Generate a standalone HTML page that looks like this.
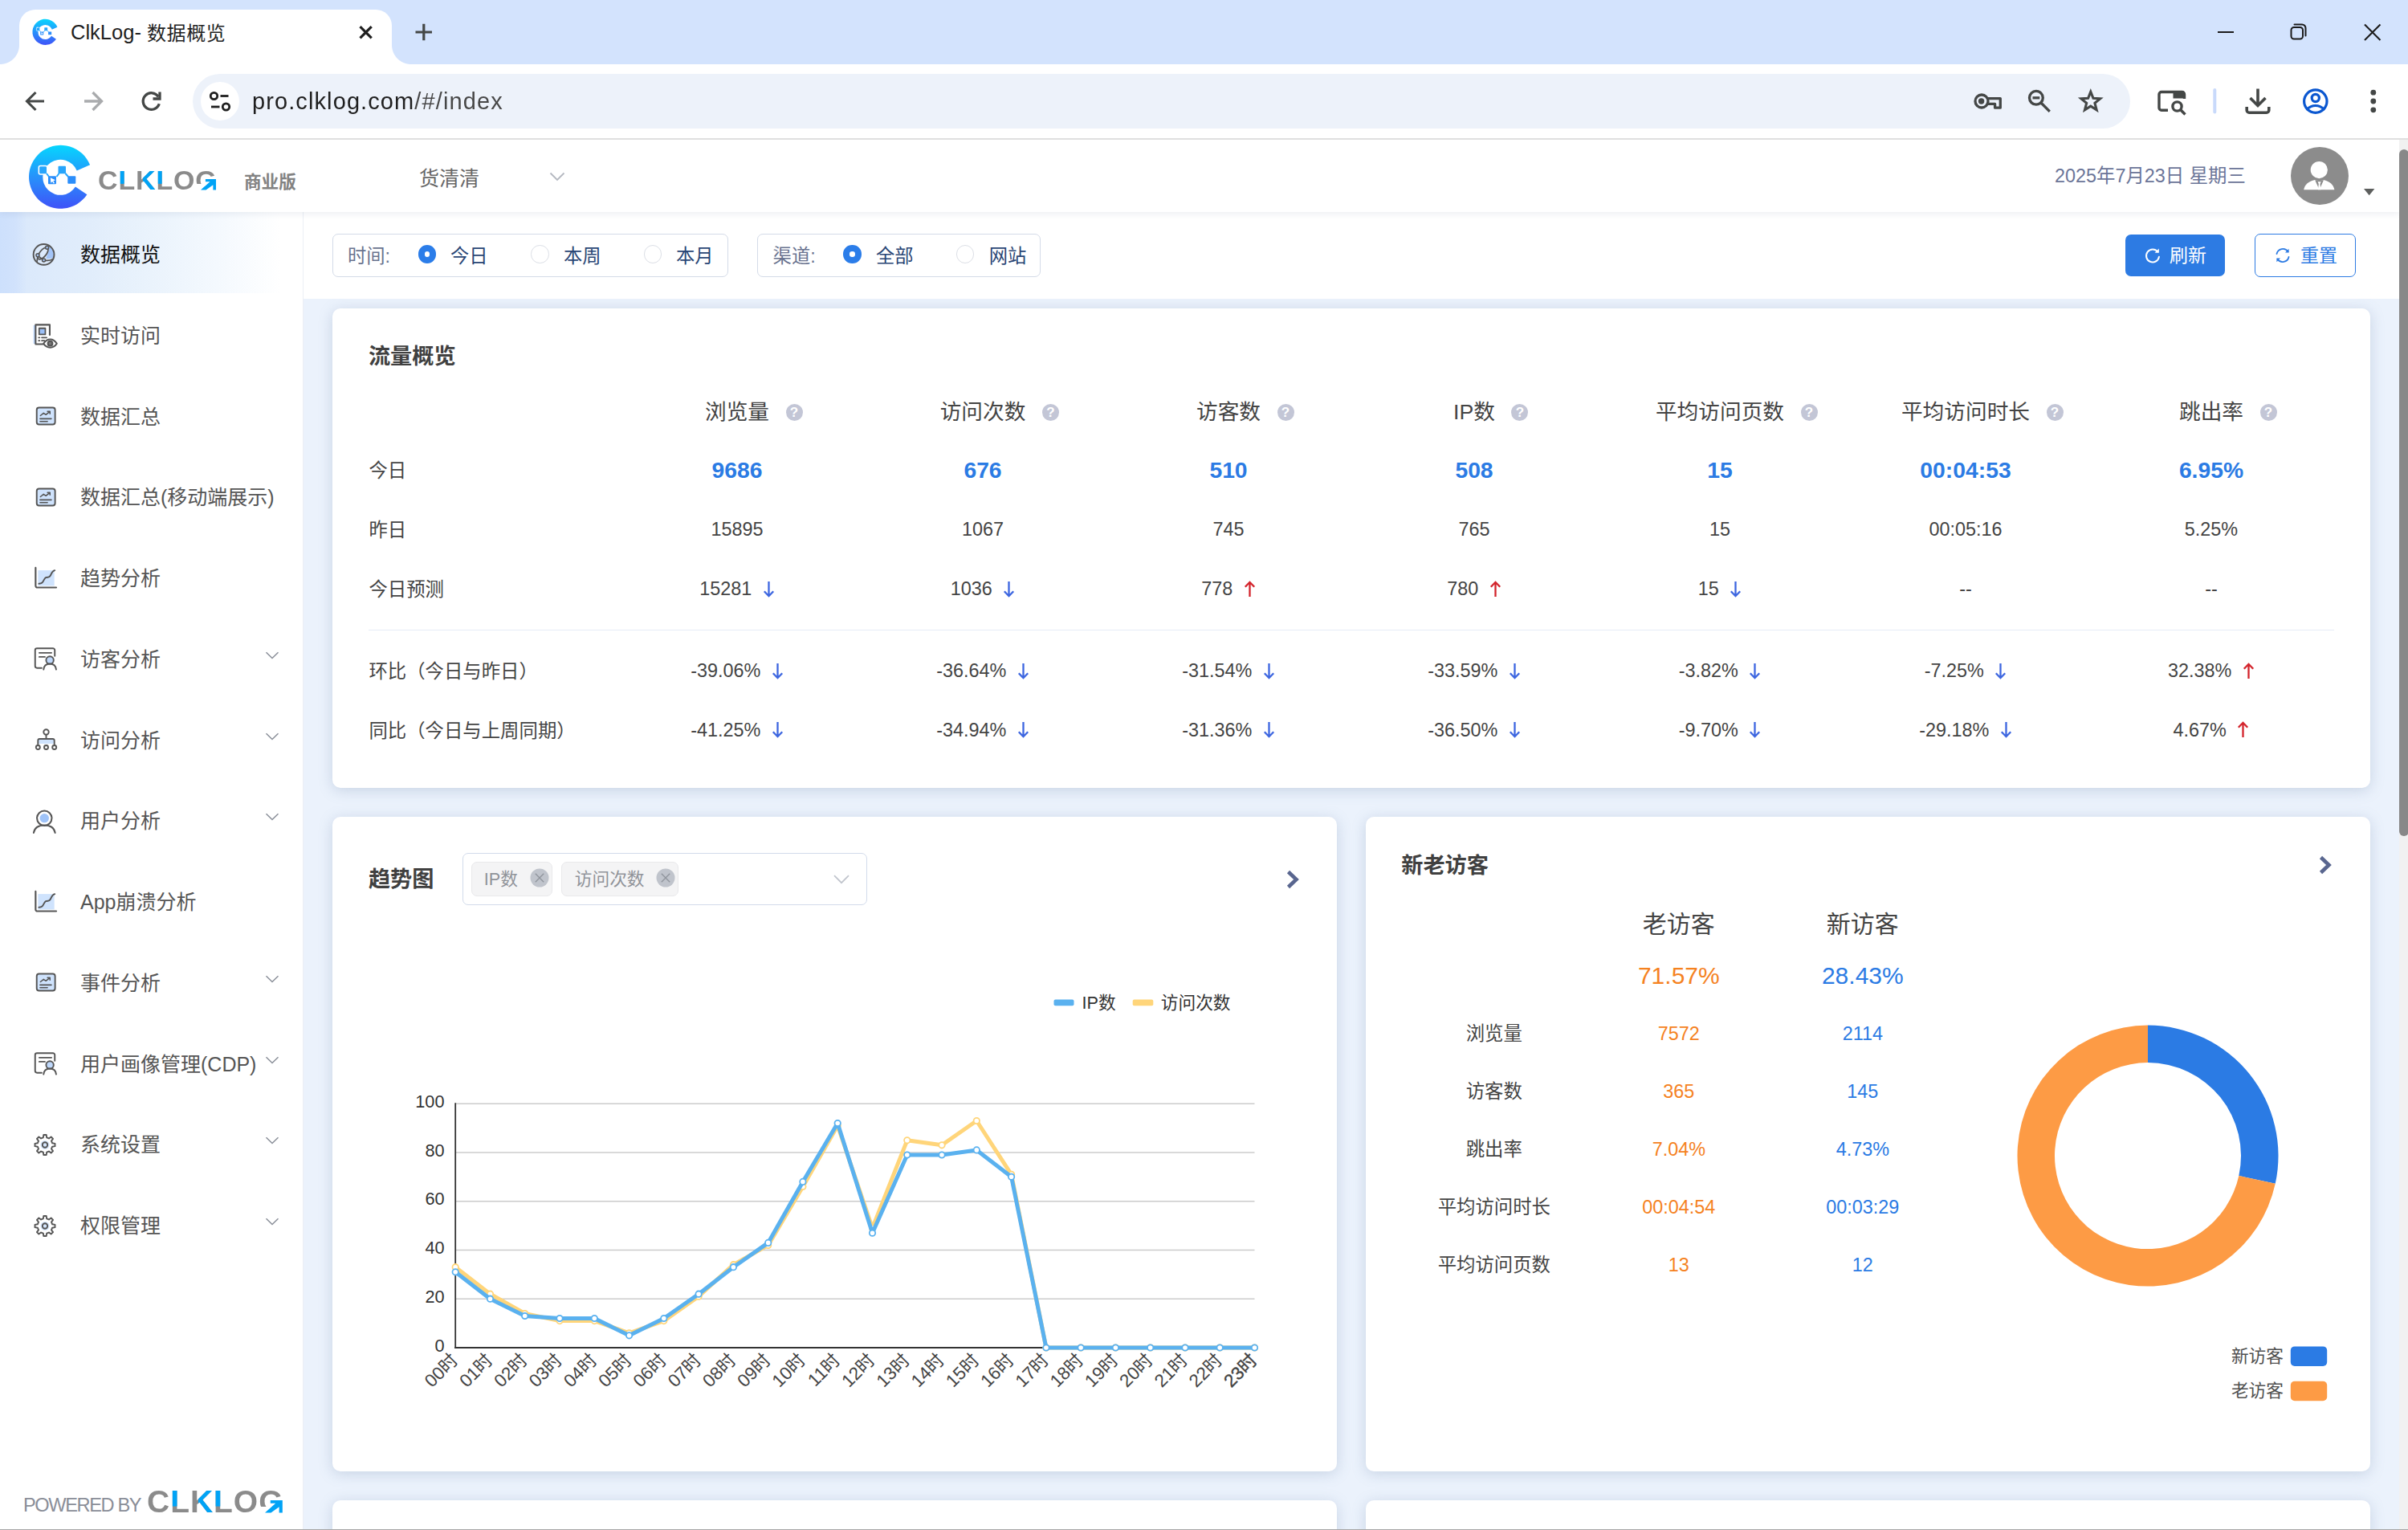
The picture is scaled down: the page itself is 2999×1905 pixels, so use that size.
<!DOCTYPE html>
<html lang="zh-CN">
<head>
<meta charset="utf-8">
<title>ClkLog- 数据概览</title>
<style>
*{box-sizing:border-box;margin:0;padding:0}
html,body{width:2999px;height:1905px;overflow:hidden;background:#fff}
body{position:relative;font-family:"Liberation Sans","Noto Sans CJK SC",sans-serif;color:#444;-webkit-font-smoothing:antialiased}
.abs{position:absolute}
svg{display:block;overflow:visible}
/* ---------- browser chrome ---------- */
#tabbar{position:absolute;left:0;top:0;width:2999px;height:80px;background:#d3e3fd}
#tab{position:absolute;left:24px;top:12px;width:464px;height:68px;background:#fff;border-radius:20px 20px 0 0}
#tab:before,#tab:after{content:"";position:absolute;bottom:0;width:24px;height:24px;background:radial-gradient(circle at 0 0,rgba(255,255,255,0) 23.5px,#fff 24.5px)}
#tab:before{left:-24px}
#tab:after{right:-24px;transform:scaleX(-1)}
#tabtitle{position:absolute;left:88px;top:22.200px;font-size:24px;line-height:38px;color:#1f1f1f;white-space:nowrap;letter-spacing:.6px}
#tabtitle .lt{font-size:25.500px;letter-spacing:0;position:relative;top:-1.300px}
#toolbar{position:absolute;left:0;top:80px;width:2999px;height:92px;background:#fff}
#tbline{position:absolute;left:0;top:172px;width:2999px;height:2px;background:#dfdfdf}
#omni{position:absolute;left:240px;top:92px;width:2413px;height:68px;border-radius:34px;background:#edf2fa}
#siteinfo{position:absolute;left:250px;top:102px;width:48px;height:48px;border-radius:24px;background:#fff}
#url{position:absolute;left:314px;top:104px;font-size:29px;line-height:44px;color:#1f1f1f;white-space:nowrap;letter-spacing:1.1px}
#url{color:transparent;-webkit-text-fill-color:transparent;background-image:linear-gradient(90deg,#1f1f1f 0,#1f1f1f 202.500px,#474747 202.500px);-webkit-background-clip:text;background-clip:text}
/* ---------- app ---------- */
#app{position:absolute;left:0;top:174px;width:2988px;height:1730px;background:#ebf2fc;overflow:hidden}
#bottomline{position:absolute;left:0;top:1904px;width:2999px;height:1px;background:#a6a6a6}
#sbtrack{position:absolute;left:2988px;top:174px;width:11px;height:1730px;background:#f1f1f1}
#sbthumb{position:absolute;left:2988px;top:186px;width:12px;height:855px;border-radius:6px;background:#888}
#header{position:absolute;left:0;top:0;width:2988px;height:90px;background:#fff;box-shadow:0 2px 8px rgba(60,80,120,.10);z-index:5}
#sidebar{position:absolute;left:0;top:90px;width:378px;height:1640px;background:#fff;border-right:1px solid #eceff5;z-index:3}
#filterbar{position:absolute;left:378px;top:90px;width:2610px;height:108px;background:#fff;z-index:2}
.card{position:absolute;background:#fff;border-radius:10px;box-shadow:0 3px 17px rgba(105,130,165,.27)}

/* header */
#hlogo{position:absolute;left:36px;top:7px}
.wm{position:absolute;font-family:"Liberation Sans",sans-serif;font-weight:bold;white-space:nowrap;line-height:1.2em;letter-spacing:.025em;color:transparent;-webkit-text-fill-color:transparent;background-image:linear-gradient(#00a3f6,#00a3f6),linear-gradient(#00a3f6,#00a3f6),linear-gradient(#00a3f6,#00a3f6),linear-gradient(#8b8b8b,#8b8b8b);background-repeat:no-repeat;background-size:.611em .732em,.485em 1.2em,.611em .732em,100% 100%;background-position:.747em 0,1.633em 0,2.13em 0,0 0;-webkit-background-clip:text;background-clip:text}
.wm u{position:absolute;background:#fff;display:block}
.wm .m1{left:3.549em;width:.838em;top:.74em;height:.3em}
.wm .m2{left:3.869em;width:.518em;top:.5em;height:.3em}
.wm svg{position:absolute;left:3.759em;top:.545em;width:.56em;height:.395em}
#hword{left:122px;top:30px;font-size:34px}
#edition{position:absolute;left:304px;top:37px;font-size:21.600px;line-height:32px;font-weight:bold;color:#828282;white-space:nowrap}
#proj{position:absolute;left:522px;top:29.500px;font-size:25px;line-height:36px;color:#666;white-space:nowrap}
#hdate{position:absolute;left:2559px;top:27.200px;font-size:23.400px;line-height:36px;color:#6b7598;white-space:nowrap}
#avatar{position:absolute;left:2853px;top:9px;width:72px;height:72px;border-radius:36px;background:#8c8c8c;overflow:hidden}
/*SIDEBAR*/

.mi{position:absolute;left:0;width:376px;height:100.75px}
.mi.act{background:linear-gradient(90deg,#cde0fc 0,#d1e2fc 5%,#dbe9fb 9%,#e1edfb 30%,#eaf3fc 50%,#f4f9fe 72%,#fff 93%)}
.mic{position:absolute;left:41px;top:38.500px}
.mt{position:absolute;left:100px;top:33px;font-size:25px;line-height:40px;color:#555;white-space:nowrap}
.mi.act .mt{color:#111}
.mch{position:absolute;left:330px;top:43px}
#powered{position:absolute;left:29px;top:1594px;font-size:23.600px;line-height:32px;color:#8a8e98;white-space:nowrap;letter-spacing:-1.38px}
#fword{left:183px;top:1583px;font-size:39px}

/*/SIDEBAR*/
/*FILTER*/

.fbox{position:absolute;top:27px;height:54px;border:1.500px solid #d4dbe8;border-radius:7px;background:#fff}
.ft{position:absolute;top:37px;font-size:23.300px;line-height:36px;color:#2a4675;white-space:nowrap}
.ft.lab{color:#69738f}
.ft b{font-weight:normal;margin-left:3px}
.rd{position:absolute;top:41.200px;width:22.400px;height:22.400px;border-radius:50%;border:1.500px solid #dcdfe6;background:#fff}
.rd.on{border:8px solid #2b7de9}
.btn{position:absolute;top:27.800px;height:52.400px;border-radius:7px}
.btn span{position:absolute;top:8px;font-size:23px;line-height:36px;white-space:nowrap}
.btn.pri{background:#2d7be3;color:#fff}
.btn.sec{background:#fff;border:1.500px solid #2d7be3;color:#2d7be3;top:27px;height:54px}
.btn.sec span{top:7.500px;left:55px}

/*/FILTER*/
/*C1*/

.ctitle{position:absolute;margin-left:-.5px;font-size:27.200px;line-height:40px;font-weight:bold;color:#404040;white-space:nowrap}
.tc{position:absolute;width:306px;height:40px;line-height:40px;text-align:center;font-size:23.400px;color:#444;white-space:nowrap}
.tc.th{font-size:26.700px;color:#444;margin-top:.5px}
.tc.tb{font-size:28.300px;font-weight:bold;color:#2b7be4}
.tl{position:absolute;margin-top:1px;height:40px;line-height:40px;font-size:23.400px;color:#444;white-space:nowrap}
.hq{position:relative;display:inline-block}
.q{position:absolute;left:100%;margin-left:20.500px;top:9.200px;width:21px;height:21px;border-radius:50%;background:#c3c6d6;color:#fff;font-style:normal;font-size:17px;line-height:21.500px;text-align:center;font-weight:bold}
.ar{display:inline-block;vertical-align:middle;margin-left:13.500px;position:relative;top:-2px}
.hr{position:absolute;height:1.200px;background:#e6ecf6}

/*/C1*/
/*C2*/

.sel{position:absolute;border:1.500px solid #d2dbeb;border-radius:7px;background:#fff}
.tag{position:absolute;border:1px solid #e9e9eb;border-radius:7px;background:#f4f4f5}
.tag span{position:absolute;top:3px;font-size:21.700px;line-height:36px;color:#909399;white-space:nowrap}

/*/C2*/
/*C3*/

.vc{position:absolute;width:260px;height:44px;line-height:44px;text-align:center;font-size:23.400px;color:#444;white-space:nowrap}
.vc.vh{font-size:30px}
.vc.vp{font-size:30px}
.vc.or{color:#f5821f}
.vc.bl{color:#2b7be4}
.lg{position:absolute;height:36px;line-height:36px;font-size:21.700px;color:#505050;white-space:nowrap}

/*/C3*/
</style>
</head>
<body>
<div id="tabbar"><div id="tab"></div><div id="tabtitle"><span class="lt">ClkLog- </span>数据概览</div></div>
<div id="toolbar"></div>
<div id="omni"></div><div id="siteinfo"></div>
<div id="url">pro.clklog.com/#/index</div>
<div id="tbline"></div>
<svg width="0" height="0" style="position:absolute"><defs>
<linearGradient id="clg" x1="0" y1="0" x2="0" y2="1"><stop offset="0" stop-color="#06d6fe"/><stop offset=".5" stop-color="#2792fb"/><stop offset="1" stop-color="#3f52f8"/></linearGradient>
<g id="clogo">
<path d="M76.100 24.300A39.500 39.500 0 1 0 72.400 61.200L57.900 51.600A22 22 0 1 1 59.700 31.500z" fill="url(#clg)"/>
<rect x="12.300" y="25.500" width="10.500" height="10.500" rx="2" fill="#27a5fc" stroke="#fff" stroke-width="1.600"/>
<rect x="36.500" y="25.800" width="9.500" height="9.500" rx="1" fill="#27a5fc"/>
<rect x="24" y="38.300" width="10" height="10" rx="1" fill="#2b8efb"/>
<rect x="48.300" y="38.300" width="10" height="9.500" rx="1" fill="#2b8efb"/>
<path d="M22 35l3 4M34.500 39l3-4M45.500 35l3.500 4" stroke="#27a5fc" stroke-width="2"/>
<path d="M26.800 40.300l6.200 3-2.600.9 1.500 2.700-1.200.7-1.500-2.700-1.900 1.900z" fill="#fff"/>
</g></defs></svg>
<svg id="chromeicons" class="abs" style="left:0;top:0" width="2999" height="174" viewBox="0 0 2999 174" fill="none" stroke-linecap="round" stroke-linejoin="round">
<defs><linearGradient id="lg" x1="0" y1="0" x2="0" y2="1"><stop offset="0" stop-color="#08d3fe"/><stop offset=".55" stop-color="#2a8cfb"/><stop offset="1" stop-color="#3d56f8"/></linearGradient></defs>
<!-- favicon -->
<g transform="translate(40.4,23.8) scale(.408)"><use href="#clogo"/></g>
<!-- tab close -->
<path d="M448.5 33.2l14.2 14.2M462.7 33.2l-14.2 14.2" stroke="#1f1f1f" stroke-width="3.2" stroke-linecap="butt"/>
<!-- new tab plus -->
<path d="M517.5 40h20.500M527.800 29.700v20.500" stroke="#444746" stroke-width="3.200" stroke-linecap="butt"/>
<!-- window controls -->
<path d="M2762 40h20" stroke="#1b1b1b" stroke-width="2" stroke-linecap="butt"/>
<rect x="2853.5" y="34" width="14.5" height="14.5" rx="3.5" stroke="#1b1b1b" stroke-width="2"/>
<path d="M2857.5 30.5h9.5a4.500 4.500 0 0 1 4.500 4.500v9.5" stroke="#1b1b1b" stroke-width="2"/>
<path d="M2945 30.5l19.5 19.5M2964.500 30.5l-19.5 19.5" stroke="#1b1b1b" stroke-width="2.100" stroke-linecap="butt"/>
<!-- back / forward / reload -->
<path d="M55 126h-21M44.500 115l-11 11 11 11" stroke="#444746" stroke-width="3.100" stroke-linecap="butt" stroke-linejoin="miter"/>
<path d="M105 126h21M115.500 115l11 11-11 11" stroke="#a9abad" stroke-width="3.300" stroke-linecap="butt" stroke-linejoin="miter"/>
<path d="M197.200 120.500a10.300 10.300 0 1 0 1.100 8.700" stroke="#444746" stroke-width="3.300" stroke-linecap="butt"/>
<path d="M199 114.500v8.500h-8.500" stroke="#444746" stroke-width="3.300" stroke-linecap="butt" stroke-linejoin="miter"/>
<!-- site info (tune) -->
<g stroke="#1f1f1f" stroke-width="2.800" stroke-linecap="butt"><circle cx="266.500" cy="119.500" r="4.200"/><path d="M274.500 119.500h10"/><circle cx="281.500" cy="133" r="4.200"/><path d="M263 133h10.500"/></g>
<!-- key -->
<g stroke="#444746" stroke-width="3.300" stroke-linejoin="round" stroke-linecap="butt"><circle cx="2468" cy="126" r="8"/><path d="M2475.600 122.600H2491.300V134.200H2484.600V129.400H2475.600"/><circle cx="2467.600" cy="126" r="3.700" fill="#444746" stroke="none"/></g>
<!-- zoom out -->
<g stroke="#444746" stroke-width="3.300" stroke-linecap="butt"><circle cx="2535.900" cy="121.800" r="8.400"/><path d="M2542 128l10.800 10.800"/><path d="M2531.500 121.800h8.800"/></g>
<!-- star -->
<path d="M2603.80 114.20L2606.97 122.33L2615.69 122.84L2608.94 128.37L2611.15 136.81L2603.80 132.10L2596.45 136.81L2598.66 128.37L2591.91 122.84L2600.63 122.33Z" stroke="#444746" stroke-width="3.100" stroke-linejoin="miter"/>
<!-- tab search -->
<g stroke="#444746" stroke-width="3.400" stroke-linecap="butt"><path d="M2700 137.300h-8a3 3 0 0 1-3-3v-16.800a3 3 0 0 1 3-3h25.500a3 3 0 0 1 3 3v5.500"/><path d="M2706.500 113h11a4 4 0 0 1 4 4v5.500h-15z" fill="#444746" stroke="none"/><circle cx="2711.500" cy="132.500" r="5.600"/><path d="M2715.800 136.800l5.700 5.700"/></g>
<!-- separator -->
<rect x="2756.300" y="110" width="4" height="31.500" rx="2" fill="#c9dafb"/>
<!-- download -->
<g stroke="#444746" stroke-width="3.600" stroke-linecap="butt"><path d="M2812 110.500v20.500"/><path d="M2802.500 122l9.500 9.500 9.500-9.500" stroke-linejoin="miter"/><path d="M2798.200 133v4.200a3 3 0 0 0 3 3h21.600a3 3 0 0 0 3-3v-4.200"/></g>
<!-- profile -->
<g stroke="#0b57d0" stroke-width="3.200"><circle cx="2883.800" cy="126.100" r="14.200"/><circle cx="2883.800" cy="122" r="4.600"/><path d="M2873.500 135.800c3-3 6.500-4.300 10.300-4.300s7.300 1.300 10.300 4.300"/></g>
<!-- dots -->
<g fill="#444746"><circle cx="2955.800" cy="115.200" r="3.400"/><circle cx="2955.800" cy="126" r="3.400"/><circle cx="2955.800" cy="136.800" r="3.400"/></g>
</svg>
<div id="app">
  <div id="header">
    <svg id="hlogo" width="79" height="79" viewBox="0 0 79 79"><use href="#clogo"/></svg>
    <div class="wm" id="hword">CLKLOG<u class="m1"></u><u class="m2"></u><svg viewBox="0 0 18.7 13.2"><path d="M5.800 0H18.700V13.200H15.100V7.100L6.400 13.200H0L11.300 3.200H5.800z" fill="#00a3f6"/></svg></div>
    <div id="edition">商业版</div>
    <div id="proj">货清清</div>
    <svg class="abs" style="left:684px;top:40px" width="20" height="12" viewBox="0 0 20 12" fill="none"><path d="M1.500 1.500l8.500 8.500 8.500-8.500" stroke="#b4b8c0" stroke-width="1.800"/></svg>
    <div id="hdate">2025年7月23日 星期三</div>
    <div id="avatar"><svg width="72" height="72" viewBox="0 0 72 72"><circle cx="35.300" cy="28.600" r="10.600" fill="#fff"/><path d="M16.200 53.300c1.200-6.500 6-10.500 13.800-12.200l5.300 1 5.300-1c7.800 1.700 12.600 5.700 13.800 12.200z" fill="#fff"/><path d="M30.200 41.300l5.400 12 5.400-12z" fill="#8c8c8c"/><path d="M33.600 43.300h4.100l-1.200 2.800.9 7.200h-3.500l.9-7.200z" fill="#fff"/></svg></div>
    <svg class="abs" style="left:2944px;top:61px" width="14" height="9" viewBox="0 0 14 9"><path d="M0 0h13.400l-6.700 8.200z" fill="#5d5f5e"/></svg>
  </div>
  <div id="sidebar"><!--SIDEBAR-->
<svg width="0" height="0" style="position:absolute"><defs><g id="i-globe"><g stroke="#555" stroke-width="1.9" fill="none" stroke-linecap="round" stroke-linejoin="round"><path d="M20.900 3.800C19.800 10 18.500 14.500 16.500 18.600c3.500.6 6.500.2 8.900-1A12.500 12.500 0 0 0 20.900 3.800z" fill="#a3c4f7" stroke="none"/><circle cx="14" cy="14" r="12.400"/><ellipse cx="13" cy="12.600" rx="8.600" ry="3.900" transform="rotate(-50.700 13 12.600)" stroke-width="1.700"/><path d="M15.500 21c3.500.5 7-.2 9.800-1.700M6.600 16.800l-.8 5.700M8 16.500l5 3.500" stroke-width="1.700"/><circle cx="17.900" cy="5.600" r="1.900" fill="#a9c8f8" stroke-width="1.500"/><circle cx="6.700" cy="14.800" r="1.900" fill="#a9c8f8" stroke-width="1.500"/><circle cx="14" cy="20.700" r="1.900" fill="#a9c8f8" stroke-width="1.500"/></g></g><g id="i-doceye"><g stroke="#555" stroke-width="1.9" fill="none" stroke-linecap="round" stroke-linejoin="round"><path d="M2 3h2.500v21H2z" fill="#bfd8fb" stroke="none"/><path d="M13.500 24.500H4.500V2.500h16v11.500"/><rect x="8.500" y="6.500" width="7" height="7" fill="#9cc0f7" stroke-width="1.600"/><path d="M8 17h1M11.500 17h5.500M8 20.500h1M11.500 20.500h3" stroke-width="1.600"/><path d="M13.500 23.800c2-3.200 4.800-4.800 7.500-4.800s5.500 1.600 7.500 4.800c-2 3.200-4.800 4.500-7.500 4.500s-5.500-1.300-7.500-4.500z" fill="#fff"/><circle cx="21" cy="23.700" r="2.600" fill="#777"/></g></g><g id="i-panel"><g stroke="#555" stroke-width="1.9" fill="none" stroke-linecap="round" stroke-linejoin="round"><rect x="2.200" y="3.200" width="23.600" height="21.600" rx="3" fill="#cfe3fd" stroke-width="2"/><path d="M7 13.500l4-3.200 3 2 5-4M16 8h3.200v3.200" stroke-width="1.600"/><path d="M6.500 17.500h14.500M6.500 21h9.500" stroke-width="1.600"/></g></g><g id="i-line"><g stroke="#555" stroke-width="1.9" fill="none" stroke-linecap="round" stroke-linejoin="round"><rect x="5" y="4.500" width="19" height="18" fill="#cfe3fd" stroke="none"/><path d="M2.200 1.500v21a2 2 0 0 0 2 2h22" stroke-width="2"/><path d="M6 20c3.500 0 4.500-1.500 6-4.500s2.500-3 4.500-3 3-1.500 4-4 2-3.500 4-4" stroke-width="1.800"/></g></g><g id="i-docuser"><g stroke="#555" stroke-width="1.9" fill="none" stroke-linecap="round" stroke-linejoin="round"><path d="M10.500 26H4.800a2.300 2.300 0 0 1-2.300-2.300V4.300A2.300 2.300 0 0 1 4.800 2h19.400a2.300 2.300 0 0 1 2.300 2.300v7"/><path d="M7.500 7.500h15M7.500 12.500h7" stroke-width="1.700"/><circle cx="20.500" cy="16.500" r="4.600" fill="#bfd8fb"/><path d="M12.800 27.800c.5-4.800 3.700-7 7.700-7s7.200 2.200 7.700 7"/></g></g><g id="i-tree"><g stroke="#555" stroke-width="1.9" fill="none" stroke-linecap="round" stroke-linejoin="round"><rect x="4.500" y="13" width="19" height="6" fill="#cfe3fd" stroke="none"/><circle cx="14" cy="4.500" r="3.200"/><path d="M14 7.800v5M3.800 20v-5a2 2 0 0 1 2-2h16.400a2 2 0 0 1 2 2v5"/><circle cx="3.800" cy="23.500" r="2.500"/><circle cx="14" cy="23.500" r="2.500"/><circle cx="24.200" cy="23.500" r="2.500"/></g></g><g id="i-user"><g stroke="#555" stroke-width="1.9" fill="none" stroke-linecap="round" stroke-linejoin="round" stroke-width="2.700"><circle cx="14" cy="10" r="5.300" fill="#9fc3f8" stroke="none"/><circle cx="14" cy="10" r="8.600"/><path d="M1.500 27c1-5.500 5.500-8.800 12.500-8.800s11.500 3.300 12.500 8.800"/></g></g><g id="i-gear"><g stroke="#555" stroke-width="1.9" fill="none" stroke-linecap="round" stroke-linejoin="round"><circle cx="14" cy="14" r="5.500" fill="#d5e6fd" stroke="none"/><path d="M11.81 4.86 L12.32 1.51 L15.68 1.51 L16.19 4.86 L18.91 5.99 L21.64 3.98 L24.02 6.36 L22.01 9.09 L23.14 11.81 L26.49 12.32 L26.49 15.68 L23.14 16.19 L22.01 18.91 L24.02 21.64 L21.64 24.02 L18.91 22.01 L16.19 23.14 L15.68 26.49 L12.32 26.49 L11.81 23.14 L9.09 22.01 L6.36 24.02 L3.98 21.64 L5.99 18.91 L4.86 16.19 L1.51 15.68 L1.51 12.32 L4.86 11.81 L5.99 9.09 L3.98 6.36 L6.36 3.98 L9.09 5.99Z" stroke-linejoin="round"/><circle cx="14" cy="14" r="3.200"/></g></g></defs></svg>
<div class="mi act" style="top:0.00px"><svg class="mic" width="28" height="28" viewBox="0 0 28 28"><use href="#i-globe" transform="translate(-1.0 -0.6) scale(1.04)"/></svg><span class="mt">数据概览</span></div>
<div class="mi" style="top:100.75px"><svg class="mic" width="28" height="28" viewBox="0 0 28 28"><use href="#i-doceye" transform="translate(-1.6 -1.4) scale(1.10)"/></svg><span class="mt">实时访问</span></div>
<div class="mi" style="top:201.50px"><svg class="mic" width="28" height="28" viewBox="0 0 28 28"><use href="#i-panel" transform="translate(2.6 0.4) scale(0.97)"/></svg><span class="mt">数据汇总</span></div>
<div class="mi" style="top:302.25px"><svg class="mic" width="28" height="28" viewBox="0 0 28 28"><use href="#i-panel" transform="translate(2.6 0.4) scale(0.97)"/></svg><span class="mt">数据汇总(移动端展示)</span></div>
<div class="mi" style="top:403.00px"><svg class="mic" width="28" height="28" viewBox="0 0 28 28"><use href="#i-line" transform="translate(1.0 -0.7) scale(1.07)"/></svg><span class="mt">趋势分析</span></div>
<div class="mi" style="top:503.75px"><svg class="mic" width="28" height="28" viewBox="0 0 28 28"><use href="#i-docuser" transform="translate(0.2 -0.8) scale(1.02)"/></svg><span class="mt">访客分析</span><svg class="mch" width="18" height="10" viewBox="0 0 18 10" fill="none"><path d="M1.500 1.200l7.500 7.300 7.500-7.300" stroke="#8a8f99" stroke-width="1.500"/></svg></div>
<div class="mi" style="top:604.50px"><svg class="mic" width="28" height="28" viewBox="0 0 28 28"><use href="#i-tree" transform="translate(2.5 0.0) scale(1.00)"/></svg><span class="mt">访问分析</span><svg class="mch" width="18" height="10" viewBox="0 0 18 10" fill="none"><path d="M1.500 1.200l7.500 7.300 7.500-7.300" stroke="#8a8f99" stroke-width="1.500"/></svg></div>
<div class="mi" style="top:705.25px"><svg class="mic" width="28" height="28" viewBox="0 0 28 28"><use href="#i-user" transform="translate(-0.7 0.0) scale(1.07)"/></svg><span class="mt">用户分析</span><svg class="mch" width="18" height="10" viewBox="0 0 18 10" fill="none"><path d="M1.500 1.200l7.500 7.300 7.500-7.300" stroke="#8a8f99" stroke-width="1.500"/></svg></div>
<div class="mi" style="top:806.00px"><svg class="mic" width="28" height="28" viewBox="0 0 28 28"><use href="#i-line" transform="translate(1.0 -0.7) scale(1.07)"/></svg><span class="mt">App崩溃分析</span></div>
<div class="mi" style="top:906.75px"><svg class="mic" width="28" height="28" viewBox="0 0 28 28"><use href="#i-panel" transform="translate(2.6 0.4) scale(0.97)"/></svg><span class="mt">事件分析</span><svg class="mch" width="18" height="10" viewBox="0 0 18 10" fill="none"><path d="M1.500 1.200l7.500 7.300 7.500-7.300" stroke="#8a8f99" stroke-width="1.500"/></svg></div>
<div class="mi" style="top:1007.50px"><svg class="mic" width="28" height="28" viewBox="0 0 28 28"><use href="#i-docuser" transform="translate(0.2 -0.8) scale(1.02)"/></svg><span class="mt">用户画像管理(CDP)</span><svg class="mch" width="18" height="10" viewBox="0 0 18 10" fill="none"><path d="M1.500 1.200l7.500 7.300 7.500-7.300" stroke="#8a8f99" stroke-width="1.500"/></svg></div>
<div class="mi" style="top:1108.25px"><svg class="mic" width="28" height="28" viewBox="0 0 28 28"><use href="#i-gear" transform="translate(1.0 0.5) scale(1.00)"/></svg><span class="mt">系统设置</span><svg class="mch" width="18" height="10" viewBox="0 0 18 10" fill="none"><path d="M1.500 1.200l7.500 7.300 7.500-7.300" stroke="#8a8f99" stroke-width="1.500"/></svg></div>
<div class="mi" style="top:1209.00px"><svg class="mic" width="28" height="28" viewBox="0 0 28 28"><use href="#i-gear" transform="translate(1.0 0.5) scale(1.00)"/></svg><span class="mt">权限管理</span><svg class="mch" width="18" height="10" viewBox="0 0 18 10" fill="none"><path d="M1.500 1.200l7.500 7.300 7.500-7.300" stroke="#8a8f99" stroke-width="1.500"/></svg></div>
<div id="powered">POWERED BY</div><div class="wm" id="fword">CLKLOG<u class="m1"></u><u class="m2"></u><svg viewBox="0 0 18.7 13.2"><path d="M5.800 0H18.700V13.200H15.100V7.100L6.400 13.200H0L11.300 3.200H5.800z" fill="#00a3f6"/></svg></div>
<!--/SIDEBAR--></div>
  <div id="filterbar"><!--FILTER-->
<div class="fbox" style="left:36.0px;width:492.6px"></div>
<span class="ft lab" style="left:55.0px">时间:</span>
<i class="rd on" style="left:142.5px"></i>
<span class="ft " style="left:183.0px">今日</span>
<i class="rd " style="left:283.2px"></i>
<span class="ft " style="left:324.0px">本周</span>
<i class="rd " style="left:423.8px"></i>
<span class="ft " style="left:464.0px">本月</span>
<div class="fbox" style="left:565.0px;width:353.0px"></div>
<span class="ft lab" style="left:584.6px">渠道:</span>
<i class="rd on" style="left:672.2px"></i>
<span class="ft " style="left:713.0px">全部</span>
<i class="rd " style="left:812.8px"></i>
<span class="ft " style="left:853.7px">网站</span>
<div class="btn pri" style="left:2269.0px;width:124px"><svg width="22" height="22" viewBox="0 0 22 22" fill="none" style="position:absolute;left:23px;top:15px"><path d="M17.300 6.500a8 8 0 1 0 1.600 6.300" stroke="#fff" stroke-width="2" stroke-linecap="round"/><path d="M18.800 2.500v5.200h-5.200z" fill="#fff"/></svg><span style="left:55px">刷新</span></div>
<div class="btn sec" style="left:2430.0px;width:126px"><svg width="22" height="22" viewBox="0 0 22 22" fill="none" style="position:absolute;left:23px;top:15px"><path d="M3.500 9a7.800 7.800 0 0 1 14-2.800M18.500 13a7.800 7.800 0 0 1-14 2.800" stroke="#2d7be3" stroke-width="1.800" stroke-linecap="round"/><path d="M18.600 2.800v4.600h-4.600zM3.400 19.200v-4.600h4.600z" fill="#2d7be3"/></svg><span style="left:56px">重置</span></div>
<!--/FILTER--></div>
  <div class="card" id="c1" style="left:414px;top:210px;width:2538px;height:597px"><!--C1-->
<div class="ctitle" style="left:45.4px;top:40.3px">流量概览</div>
<div class="tc th" style="left:351.0px;top:108.9px"><span class="hq">浏览量<i class="q">?</i></span></div>
<div class="tc th" style="left:657.0px;top:108.9px"><span class="hq">访问次数<i class="q">?</i></span></div>
<div class="tc th" style="left:963.0px;top:108.9px"><span class="hq">访客数<i class="q">?</i></span></div>
<div class="tc th" style="left:1269.0px;top:108.9px"><span class="hq">IP数<i class="q">?</i></span></div>
<div class="tc th" style="left:1575.0px;top:108.9px"><span class="hq">平均访问页数<i class="q">?</i></span></div>
<div class="tc th" style="left:1881.0px;top:108.9px"><span class="hq">平均访问时长<i class="q">?</i></span></div>
<div class="tc th" style="left:2187.0px;top:108.9px"><span class="hq">跳出率<i class="q">?</i></span></div>
<div class="tc tb" style="left:351.0px;top:181.3px">9686</div>
<div class="tc tb" style="left:657.0px;top:181.3px">676</div>
<div class="tc tb" style="left:963.0px;top:181.3px">510</div>
<div class="tc tb" style="left:1269.0px;top:181.3px">508</div>
<div class="tc tb" style="left:1575.0px;top:181.3px">15</div>
<div class="tc tb" style="left:1881.0px;top:181.3px">00:04:53</div>
<div class="tc tb" style="left:2187.0px;top:181.3px">6.95%</div>
<div class="tc " style="left:351.0px;top:254.7px">15895</div>
<div class="tc " style="left:657.0px;top:254.7px">1067</div>
<div class="tc " style="left:963.0px;top:254.7px">745</div>
<div class="tc " style="left:1269.0px;top:254.7px">765</div>
<div class="tc " style="left:1575.0px;top:254.7px">15</div>
<div class="tc " style="left:1881.0px;top:254.7px">00:05:16</div>
<div class="tc " style="left:2187.0px;top:254.7px">5.25%</div>
<div class="tc " style="left:351.0px;top:329.2px">15281<svg class="ar" width="15" height="21" viewBox="0 0 15 21" fill="none"><path d="M7.500 1v18M1.800 13.200l5.700 6 5.700-6" stroke="#3d66e0" stroke-width="2.300"/></svg></div>
<div class="tc " style="left:657.0px;top:329.2px">1036<svg class="ar" width="15" height="21" viewBox="0 0 15 21" fill="none"><path d="M7.500 1v18M1.800 13.200l5.700 6 5.700-6" stroke="#3d66e0" stroke-width="2.300"/></svg></div>
<div class="tc " style="left:963.0px;top:329.2px">778<svg class="ar" width="15" height="21" viewBox="0 0 15 21" fill="none"><path d="M7.500 20V2M1.800 7.800l5.700-6 5.700 6" stroke="#d3242c" stroke-width="2.300"/></svg></div>
<div class="tc " style="left:1269.0px;top:329.2px">780<svg class="ar" width="15" height="21" viewBox="0 0 15 21" fill="none"><path d="M7.500 20V2M1.800 7.800l5.700-6 5.700 6" stroke="#d3242c" stroke-width="2.300"/></svg></div>
<div class="tc " style="left:1575.0px;top:329.2px">15<svg class="ar" width="15" height="21" viewBox="0 0 15 21" fill="none"><path d="M7.500 1v18M1.800 13.200l5.700 6 5.700-6" stroke="#3d66e0" stroke-width="2.300"/></svg></div>
<div class="tc " style="left:1881.0px;top:329.2px">--</div>
<div class="tc " style="left:2187.0px;top:329.2px">--</div>
<div class="tc " style="left:351.0px;top:431.2px">-39.06%<svg class="ar" width="15" height="21" viewBox="0 0 15 21" fill="none"><path d="M7.500 1v18M1.800 13.200l5.700 6 5.700-6" stroke="#3d66e0" stroke-width="2.300"/></svg></div>
<div class="tc " style="left:657.0px;top:431.2px">-36.64%<svg class="ar" width="15" height="21" viewBox="0 0 15 21" fill="none"><path d="M7.500 1v18M1.800 13.200l5.700 6 5.700-6" stroke="#3d66e0" stroke-width="2.300"/></svg></div>
<div class="tc " style="left:963.0px;top:431.2px">-31.54%<svg class="ar" width="15" height="21" viewBox="0 0 15 21" fill="none"><path d="M7.500 1v18M1.800 13.200l5.700 6 5.700-6" stroke="#3d66e0" stroke-width="2.300"/></svg></div>
<div class="tc " style="left:1269.0px;top:431.2px">-33.59%<svg class="ar" width="15" height="21" viewBox="0 0 15 21" fill="none"><path d="M7.500 1v18M1.800 13.200l5.700 6 5.700-6" stroke="#3d66e0" stroke-width="2.300"/></svg></div>
<div class="tc " style="left:1575.0px;top:431.2px">-3.82%<svg class="ar" width="15" height="21" viewBox="0 0 15 21" fill="none"><path d="M7.500 1v18M1.800 13.200l5.700 6 5.700-6" stroke="#3d66e0" stroke-width="2.300"/></svg></div>
<div class="tc " style="left:1881.0px;top:431.2px">-7.25%<svg class="ar" width="15" height="21" viewBox="0 0 15 21" fill="none"><path d="M7.500 1v18M1.800 13.200l5.700 6 5.700-6" stroke="#3d66e0" stroke-width="2.300"/></svg></div>
<div class="tc " style="left:2187.0px;top:431.2px">32.38%<svg class="ar" width="15" height="21" viewBox="0 0 15 21" fill="none"><path d="M7.500 20V2M1.800 7.800l5.700-6 5.700 6" stroke="#d3242c" stroke-width="2.300"/></svg></div>
<div class="tc " style="left:351.0px;top:504.7px">-41.25%<svg class="ar" width="15" height="21" viewBox="0 0 15 21" fill="none"><path d="M7.500 1v18M1.800 13.200l5.700 6 5.700-6" stroke="#3d66e0" stroke-width="2.300"/></svg></div>
<div class="tc " style="left:657.0px;top:504.7px">-34.94%<svg class="ar" width="15" height="21" viewBox="0 0 15 21" fill="none"><path d="M7.500 1v18M1.800 13.200l5.700 6 5.700-6" stroke="#3d66e0" stroke-width="2.300"/></svg></div>
<div class="tc " style="left:963.0px;top:504.7px">-31.36%<svg class="ar" width="15" height="21" viewBox="0 0 15 21" fill="none"><path d="M7.500 1v18M1.800 13.200l5.700 6 5.700-6" stroke="#3d66e0" stroke-width="2.300"/></svg></div>
<div class="tc " style="left:1269.0px;top:504.7px">-36.50%<svg class="ar" width="15" height="21" viewBox="0 0 15 21" fill="none"><path d="M7.500 1v18M1.800 13.200l5.700 6 5.700-6" stroke="#3d66e0" stroke-width="2.300"/></svg></div>
<div class="tc " style="left:1575.0px;top:504.7px">-9.70%<svg class="ar" width="15" height="21" viewBox="0 0 15 21" fill="none"><path d="M7.500 1v18M1.800 13.200l5.700 6 5.700-6" stroke="#3d66e0" stroke-width="2.300"/></svg></div>
<div class="tc " style="left:1881.0px;top:504.7px">-29.18%<svg class="ar" width="15" height="21" viewBox="0 0 15 21" fill="none"><path d="M7.500 1v18M1.800 13.200l5.700 6 5.700-6" stroke="#3d66e0" stroke-width="2.300"/></svg></div>
<div class="tc " style="left:2187.0px;top:504.7px">4.67%<svg class="ar" width="15" height="21" viewBox="0 0 15 21" fill="none"><path d="M7.500 20V2M1.800 7.800l5.700-6 5.700 6" stroke="#d3242c" stroke-width="2.300"/></svg></div>
<div class="tl" style="left:45.4px;top:181.3px">今日</div>
<div class="tl" style="left:45.4px;top:254.7px">昨日</div>
<div class="tl" style="left:45.4px;top:329.2px">今日预测</div>
<div class="tl" style="left:45.4px;top:431.2px">环比（今日与昨日）</div>
<div class="tl" style="left:45.4px;top:504.7px">同比（今日与上周同期）</div>
<div class="hr" style="left:45.4px;top:400.0px;width:2447.6px"></div>
<!--/C1--></div>
  <div class="card" id="c2" style="left:414px;top:843px;width:1251px;height:815px"><!--C2-->
<div class="ctitle" style="left:45.4px;top:57.5px">趋势图</div>
<div class="sel" style="left:161.8px;top:45.0px;width:504.0px;height:65.0px"></div>
<div class="tag" style="left:173.3px;top:55.9px;width:100.4px;height:43.4px"><span style="left:14.5px">IP数</span><svg style="position:absolute;left:71.7px;top:7px" width="24" height="24" viewBox="0 0 24 24"><circle cx="12" cy="12" r="11.500" fill="#c0c4cc"/><path d="M6.800 6.800l10.400 10.400M17.200 6.800L6.800 17.200" stroke="#8f949c" stroke-width="1.300"/></svg></div>
<div class="tag" style="left:285.2px;top:55.9px;width:145.5px;height:43.4px"><span style="left:15.6px">访问次数</span><svg style="position:absolute;left:116.8px;top:7px" width="24" height="24" viewBox="0 0 24 24"><circle cx="12" cy="12" r="11.500" fill="#c0c4cc"/><path d="M6.800 6.800l10.400 10.400M17.200 6.800L6.800 17.200" stroke="#8f949c" stroke-width="1.300"/></svg></div>
<svg class="abs" style="left:624.4px;top:71.5px" width="20" height="12" viewBox="0 0 20 12" fill="none"><path d="M1 1.200l9 9 9-9" stroke="#c0c4cc" stroke-width="1.700"/></svg>
<svg class="abs" style="left:1186.5px;top:65.5px" width="18" height="24" viewBox="0 0 18 24" fill="none"><path d="M3.500 2.500l10 9.500-10 9.500" stroke="#59668f" stroke-width="4.600" stroke-linejoin="miter"/></svg>
<svg class="abs" style="left:0;top:0" width="1251" height="815" viewBox="0 0 1251 815" font-family="Liberation Sans, Noto Sans CJK SC, sans-serif" font-size="21.700"><rect x="898.5" y="227.6" width="25" height="7.600" rx="2" fill="#5ab1ef"/><text x="933.6" y="239.0" fill="#333">IP数</text><rect x="996.7" y="227.6" width="25.600" height="7.600" rx="2" fill="#ffd57a"/><text x="1031.8" y="239.0" fill="#333">访问次数</text><path d="M153.2 600.24H1148.5" stroke="#ccc" stroke-width="1.600"/><path d="M153.2 539.48H1148.5" stroke="#ccc" stroke-width="1.600"/><path d="M153.2 478.72H1148.5" stroke="#ccc" stroke-width="1.600"/><path d="M153.2 417.96H1148.5" stroke="#ccc" stroke-width="1.600"/><path d="M153.2 357.20H1148.5" stroke="#ccc" stroke-width="1.600"/><path d="M153.2 356.2V662.0" stroke="#333" stroke-width="1.800"/><path d="M152.2 661.0H1148.5" stroke="#333" stroke-width="1.800"/><text x="139.5" y="665.6" text-anchor="end" fill="#333">0</text><text x="139.5" y="604.8" text-anchor="end" fill="#333">20</text><text x="139.5" y="544.1" text-anchor="end" fill="#333">40</text><text x="139.5" y="483.3" text-anchor="end" fill="#333">60</text><text x="139.5" y="422.6" text-anchor="end" fill="#333">80</text><text x="139.5" y="361.8" text-anchor="end" fill="#333">100</text><text transform="translate(157.7 678.0) rotate(-45)" text-anchor="end" fill="#444" font-size="22.500">00时</text><text transform="translate(201.0 678.0) rotate(-45)" text-anchor="end" fill="#444" font-size="22.500">01时</text><text transform="translate(244.2 678.0) rotate(-45)" text-anchor="end" fill="#444" font-size="22.500">02时</text><text transform="translate(287.5 678.0) rotate(-45)" text-anchor="end" fill="#444" font-size="22.500">03时</text><text transform="translate(330.8 678.0) rotate(-45)" text-anchor="end" fill="#444" font-size="22.500">04时</text><text transform="translate(374.1 678.0) rotate(-45)" text-anchor="end" fill="#444" font-size="22.500">05时</text><text transform="translate(417.3 678.0) rotate(-45)" text-anchor="end" fill="#444" font-size="22.500">06时</text><text transform="translate(460.6 678.0) rotate(-45)" text-anchor="end" fill="#444" font-size="22.500">07时</text><text transform="translate(503.9 678.0) rotate(-45)" text-anchor="end" fill="#444" font-size="22.500">08时</text><text transform="translate(547.2 678.0) rotate(-45)" text-anchor="end" fill="#444" font-size="22.500">09时</text><text transform="translate(590.4 678.0) rotate(-45)" text-anchor="end" fill="#444" font-size="22.500">10时</text><text transform="translate(633.7 678.0) rotate(-45)" text-anchor="end" fill="#444" font-size="22.500">11时</text><text transform="translate(677.0 678.0) rotate(-45)" text-anchor="end" fill="#444" font-size="22.500">12时</text><text transform="translate(720.3 678.0) rotate(-45)" text-anchor="end" fill="#444" font-size="22.500">13时</text><text transform="translate(763.5 678.0) rotate(-45)" text-anchor="end" fill="#444" font-size="22.500">14时</text><text transform="translate(806.8 678.0) rotate(-45)" text-anchor="end" fill="#444" font-size="22.500">15时</text><text transform="translate(850.1 678.0) rotate(-45)" text-anchor="end" fill="#444" font-size="22.500">16时</text><text transform="translate(893.4 678.0) rotate(-45)" text-anchor="end" fill="#444" font-size="22.500">17时</text><text transform="translate(936.6 678.0) rotate(-45)" text-anchor="end" fill="#444" font-size="22.500">18时</text><text transform="translate(979.9 678.0) rotate(-45)" text-anchor="end" fill="#444" font-size="22.500">19时</text><text transform="translate(1023.2 678.0) rotate(-45)" text-anchor="end" fill="#444" font-size="22.500">20时</text><text transform="translate(1066.5 678.0) rotate(-45)" text-anchor="end" fill="#444" font-size="22.500">21时</text><text transform="translate(1109.7 678.0) rotate(-45)" text-anchor="end" fill="#444" font-size="22.500">22时</text><text transform="translate(1153.0 678.0) rotate(-45)" text-anchor="end" fill="#444" font-size="22.500" stroke="#444" stroke-width=".35">23时</text><polyline points="153.2,560.7 196.5,594.2 239.7,618.5 283.0,627.6 326.3,627.6 369.6,642.8 412.8,627.6 456.1,597.2 499.4,557.7 542.7,533.4 585.9,460.5 629.2,384.5 672.5,512.1 715.8,402.8 759.0,408.8 802.3,378.5 845.6,445.3 888.9,661.0 932.1,661.0 975.4,661.0 1018.7,661.0 1062.0,661.0 1105.2,661.0 1148.5,661.0" fill="none" stroke="#ffd57a" stroke-width="5" stroke-linejoin="round"/><circle cx="153.2" cy="560.7" r="3.700" fill="#fff" stroke="#ffd57a" stroke-width="1.800"/><circle cx="196.5" cy="594.2" r="3.700" fill="#fff" stroke="#ffd57a" stroke-width="1.800"/><circle cx="239.7" cy="618.5" r="3.700" fill="#fff" stroke="#ffd57a" stroke-width="1.800"/><circle cx="283.0" cy="627.6" r="3.700" fill="#fff" stroke="#ffd57a" stroke-width="1.800"/><circle cx="326.3" cy="627.6" r="3.700" fill="#fff" stroke="#ffd57a" stroke-width="1.800"/><circle cx="369.6" cy="642.8" r="3.700" fill="#fff" stroke="#ffd57a" stroke-width="1.800"/><circle cx="412.8" cy="627.6" r="3.700" fill="#fff" stroke="#ffd57a" stroke-width="1.800"/><circle cx="456.1" cy="597.2" r="3.700" fill="#fff" stroke="#ffd57a" stroke-width="1.800"/><circle cx="499.4" cy="557.7" r="3.700" fill="#fff" stroke="#ffd57a" stroke-width="1.800"/><circle cx="542.7" cy="533.4" r="3.700" fill="#fff" stroke="#ffd57a" stroke-width="1.800"/><circle cx="585.9" cy="460.5" r="3.700" fill="#fff" stroke="#ffd57a" stroke-width="1.800"/><circle cx="629.2" cy="384.5" r="3.700" fill="#fff" stroke="#ffd57a" stroke-width="1.800"/><circle cx="672.5" cy="512.1" r="3.700" fill="#fff" stroke="#ffd57a" stroke-width="1.800"/><circle cx="715.8" cy="402.8" r="3.700" fill="#fff" stroke="#ffd57a" stroke-width="1.800"/><circle cx="759.0" cy="408.8" r="3.700" fill="#fff" stroke="#ffd57a" stroke-width="1.800"/><circle cx="802.3" cy="378.5" r="3.700" fill="#fff" stroke="#ffd57a" stroke-width="1.800"/><circle cx="845.6" cy="445.3" r="3.700" fill="#fff" stroke="#ffd57a" stroke-width="1.800"/><circle cx="888.9" cy="661.0" r="3.700" fill="#fff" stroke="#ffd57a" stroke-width="1.800"/><circle cx="932.1" cy="661.0" r="3.700" fill="#fff" stroke="#ffd57a" stroke-width="1.800"/><circle cx="975.4" cy="661.0" r="3.700" fill="#fff" stroke="#ffd57a" stroke-width="1.800"/><circle cx="1018.7" cy="661.0" r="3.700" fill="#fff" stroke="#ffd57a" stroke-width="1.800"/><circle cx="1062.0" cy="661.0" r="3.700" fill="#fff" stroke="#ffd57a" stroke-width="1.800"/><circle cx="1105.2" cy="661.0" r="3.700" fill="#fff" stroke="#ffd57a" stroke-width="1.800"/><circle cx="1148.5" cy="661.0" r="3.700" fill="#fff" stroke="#ffd57a" stroke-width="1.800"/><polyline points="153.2,566.8 196.5,600.2 239.7,621.5 283.0,624.5 326.3,624.5 369.6,645.8 412.8,624.5 456.1,594.2 499.4,560.7 542.7,530.4 585.9,454.4 629.2,381.5 672.5,518.2 715.8,421.0 759.0,421.0 802.3,414.9 845.6,448.3 888.9,661.0 932.1,661.0 975.4,661.0 1018.7,661.0 1062.0,661.0 1105.2,661.0 1148.5,661.0" fill="none" stroke="#5ab1ef" stroke-width="5" stroke-linejoin="round"/><circle cx="153.2" cy="566.8" r="3.700" fill="#fff" stroke="#5ab1ef" stroke-width="1.800"/><circle cx="196.5" cy="600.2" r="3.700" fill="#fff" stroke="#5ab1ef" stroke-width="1.800"/><circle cx="239.7" cy="621.5" r="3.700" fill="#fff" stroke="#5ab1ef" stroke-width="1.800"/><circle cx="283.0" cy="624.5" r="3.700" fill="#fff" stroke="#5ab1ef" stroke-width="1.800"/><circle cx="326.3" cy="624.5" r="3.700" fill="#fff" stroke="#5ab1ef" stroke-width="1.800"/><circle cx="369.6" cy="645.8" r="3.700" fill="#fff" stroke="#5ab1ef" stroke-width="1.800"/><circle cx="412.8" cy="624.5" r="3.700" fill="#fff" stroke="#5ab1ef" stroke-width="1.800"/><circle cx="456.1" cy="594.2" r="3.700" fill="#fff" stroke="#5ab1ef" stroke-width="1.800"/><circle cx="499.4" cy="560.7" r="3.700" fill="#fff" stroke="#5ab1ef" stroke-width="1.800"/><circle cx="542.7" cy="530.4" r="3.700" fill="#fff" stroke="#5ab1ef" stroke-width="1.800"/><circle cx="585.9" cy="454.4" r="3.700" fill="#fff" stroke="#5ab1ef" stroke-width="1.800"/><circle cx="629.2" cy="381.5" r="3.700" fill="#fff" stroke="#5ab1ef" stroke-width="1.800"/><circle cx="672.5" cy="518.2" r="3.700" fill="#fff" stroke="#5ab1ef" stroke-width="1.800"/><circle cx="715.8" cy="421.0" r="3.700" fill="#fff" stroke="#5ab1ef" stroke-width="1.800"/><circle cx="759.0" cy="421.0" r="3.700" fill="#fff" stroke="#5ab1ef" stroke-width="1.800"/><circle cx="802.3" cy="414.9" r="3.700" fill="#fff" stroke="#5ab1ef" stroke-width="1.800"/><circle cx="845.6" cy="448.3" r="3.700" fill="#fff" stroke="#5ab1ef" stroke-width="1.800"/><circle cx="888.9" cy="661.0" r="3.700" fill="#fff" stroke="#5ab1ef" stroke-width="1.800"/><circle cx="932.1" cy="661.0" r="3.700" fill="#fff" stroke="#5ab1ef" stroke-width="1.800"/><circle cx="975.4" cy="661.0" r="3.700" fill="#fff" stroke="#5ab1ef" stroke-width="1.800"/><circle cx="1018.7" cy="661.0" r="3.700" fill="#fff" stroke="#5ab1ef" stroke-width="1.800"/><circle cx="1062.0" cy="661.0" r="3.700" fill="#fff" stroke="#5ab1ef" stroke-width="1.800"/><circle cx="1105.2" cy="661.0" r="3.700" fill="#fff" stroke="#5ab1ef" stroke-width="1.800"/><circle cx="1148.5" cy="661.0" r="3.700" fill="#fff" stroke="#5ab1ef" stroke-width="1.800"/></svg>
<!--/C2--></div>
  <div class="card" id="c3" style="left:1701px;top:843px;width:1251px;height:815px"><!--C3-->
<div class="ctitle" style="left:44.7px;top:40.7px">新老访客</div>
<svg class="abs" style="left:1186.0px;top:48.0px" width="18" height="24" viewBox="0 0 18 24" fill="none"><path d="M3.500 2.500l10 9.500-10 9.500" stroke="#59668f" stroke-width="4.600" stroke-linejoin="miter"/></svg>
<div class="vc vh" style="left:259.8px;top:111.6px">老访客</div>
<div class="vc vh" style="left:488.8px;top:111.6px">新访客</div>
<div class="vc vp or" style="left:259.8px;top:175.7px">71.57%</div>
<div class="vc vp bl" style="left:488.8px;top:175.7px">28.43%</div>
<div class="vc " style="left:29.8px;top:248.0px">浏览量</div>
<div class="vc or" style="left:259.8px;top:248.0px">7572</div>
<div class="vc bl" style="left:488.8px;top:248.0px">2114</div>
<div class="vc " style="left:29.8px;top:320.3px">访客数</div>
<div class="vc or" style="left:259.8px;top:320.3px">365</div>
<div class="vc bl" style="left:488.8px;top:320.3px">145</div>
<div class="vc " style="left:29.8px;top:392.2px">跳出率</div>
<div class="vc or" style="left:259.8px;top:392.2px">7.04%</div>
<div class="vc bl" style="left:488.8px;top:392.2px">4.73%</div>
<div class="vc " style="left:29.8px;top:464.3px">平均访问时长</div>
<div class="vc or" style="left:259.8px;top:464.3px">00:04:54</div>
<div class="vc bl" style="left:488.8px;top:464.3px">00:03:29</div>
<div class="vc " style="left:29.8px;top:536.4px">平均访问页数</div>
<div class="vc or" style="left:259.8px;top:536.4px">13</div>
<div class="vc bl" style="left:488.8px;top:536.4px">12</div>
<svg class="abs" style="left:0;top:0" width="1251" height="815" viewBox="0 0 1251 815"><path d="M974.00 259.60A162.5 162.5 0 0 1 1132.74 456.85L1087.32 446.91A116.0 116.0 0 0 0 974.00 306.10Z" fill="#2b7be4"/><path d="M1132.74 456.85A162.5 162.5 0 1 1 974.00 259.60L974.00 306.10A116.0 116.0 0 1 0 1087.32 446.91Z" fill="#fd9b45"/><rect x="1151.8" y="659.4" width="45.400" height="24.600" rx="5" fill="#2b7be4"/><rect x="1151.8" y="702.7" width="45.400" height="24.600" rx="5" fill="#fd9b45"/></svg>
<div class="lg" style="right:108.0px;top:653.7px">新访客</div>
<div class="lg" style="right:108.0px;top:697.0px">老访客</div>
<!--/C3--></div>
  <div class="card" id="c4" style="left:414px;top:1694px;width:1251px;height:200px"><!--C4-->
<!--/C4--></div>
  <div class="card" id="c5" style="left:1701px;top:1694px;width:1251px;height:200px"><!--C5-->
<!--/C5--></div>
</div>
<div id="sbtrack"></div><div id="sbthumb"></div>
<div id="bottomline"></div>
</body>
</html>
